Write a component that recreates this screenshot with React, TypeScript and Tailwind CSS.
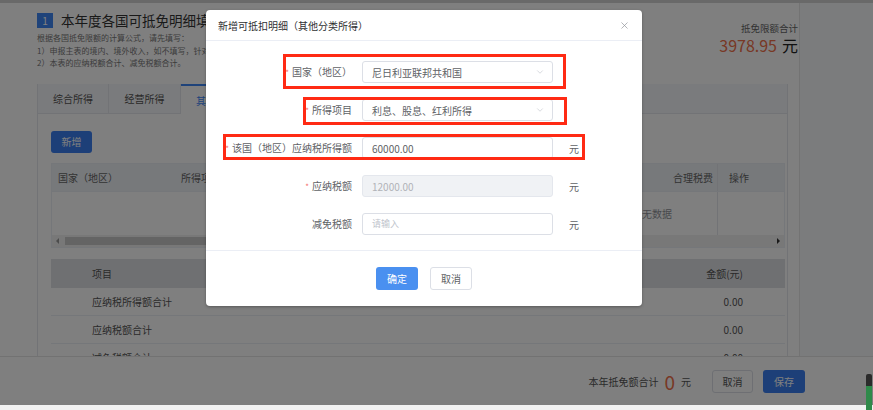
import { ChevronDown, X } from 'lucide-react'

const font = "font-['Noto_Sans_CJK_SC','Noto_Sans',sans-serif]"

function Row({ label, required, unit, children }: { label: string; required?: boolean; unit?: boolean; children: React.ReactNode }) {
  return (
    <div className="flex h-[22px] items-center">
      <div className="w-[146px] text-right text-[10px] leading-none text-[#606266]">
        {required && <span className="mr-[3px] text-[8px] text-[#f56c6c]">*</span>}
        {label}
      </div>
      <div className="ml-[10px] h-full w-[191px]">{children}</div>
      {unit && <span className="ml-[16px] text-[10px] text-[#606266]">元</span>}
    </div>
  )
}

export default function App() {
  return (
    <div className={`relative h-[410px] w-[873px] overflow-hidden bg-[#f2f2f2] ${font}`}>
      {/* background page */}
      <div className="flex h-[405px] flex-col border-t-[3px] border-[#d2d2d2] bg-white">
        <div className="flex flex-1 overflow-hidden">
          <div className="w-[800px] border-r border-[#e6e6e6] pl-[37px] pt-[9px]">
            {/* header */}
            <div className="flex h-[72px] items-start justify-between">
              <div>
                <div className="flex h-[16px] items-center gap-[8px]">
                  <div className="flex h-[15px] w-[16px] items-center justify-center bg-[#3f86f5] text-[10px] text-white">1</div>
                  <span className="text-[13.5px] text-[#333]">本年度各国可抵免明细填报</span>
                </div>
                <div className="mt-[4px] text-[8px] leading-[12.5px] text-[#777]">
                  <p>根据各国抵免限额的计算公式，请先填写：</p>
                  <p>1）申报主表的境内、境外收入，如不填写，针对各国的抵免限额计算将会有误；</p>
                  <p>2）本表的应纳税额合计、减免税额合计。</p>
                </div>
              </div>
              <div className="pr-[1px] pt-[11px] text-right">
                <p className="text-[9.5px] leading-[11px] text-[#666]">抵免限额合计</p>
                <p className="mt-[2px] leading-[19px]">
                  <span className="text-[16px] text-[#f0714a]">3978.95</span>
                  <span className="ml-[5px] text-[16px] text-[#222]">元</span>
                </p>
              </div>
            </div>

            {/* panel */}
            <div className="w-[751px] border-x border-[#e4e7ed]">
              <div className="flex h-[30px] border-b border-[#e4e7ed] bg-[#f5f7fa] text-[10px] text-[#555]">
                <div className="flex w-[71px] items-center justify-center border-r border-[#e4e7ed]">综合所得</div>
                <div className="flex w-[72px] items-center justify-center border-r border-[#e4e7ed]">经营所得</div>
                <div className="-mb-px flex w-[90px] items-center justify-center border-t-2 border-[#3f86f5] bg-white text-[#3f86f5]">其他分类所得</div>
              </div>
              <div className="pl-[13px] pt-[13px]">
                <button className="h-[22px] w-[41px] rounded-[3px] bg-[#3a7ef0] text-[10px] text-white">新增</button>

                <div className="mt-[10px] w-[734px] border border-[#ebeef5] text-[10px]">
                  <div className="flex h-[27px] items-center bg-[#eef2f7] text-[#666]">
                    <div className="w-[129px] pl-[6px]">国家（地区）</div>
                    <div className="flex-1">所得项目</div>
                    <div className="w-[60px] pr-[4px] text-right">合理税费</div>
                    <div className="flex h-full w-[67px] items-center border-l border-[#e4e7ed] pl-[11px]">操作</div>
                  </div>
                  <div className="flex h-[44px] border-t border-[#ebeef5]">
                    <div className="flex flex-1 items-center pl-[580px] text-[#909399]">暂无数据</div>
                    <div className="w-[67px] border-l border-[#e4e7ed]" />
                  </div>
                  <div className="flex h-[12px] items-center bg-[#f1f1f1] px-[4px]">
                    <span className="h-0 w-0 border-y-[3px] border-r-[3px] border-y-transparent border-r-[#999]" />
                    <div className="ml-[6px] h-[8px] w-[420px] bg-[#c8c8c8]" />
                    <div className="flex-1" />
                    <span className="h-0 w-0 border-y-[3px] border-l-[3px] border-y-transparent border-l-[#333]" />
                  </div>
                </div>

                <div className="mt-[11px] w-[734px] text-[10px] text-[#555]">
                  <div className="flex h-[29px] items-center justify-between bg-[#dfe1e4] pl-[41px] pr-[42px]">
                    <span>项目</span>
                    <span>金额(元)</span>
                  </div>
                  {['应纳税所得额合计', '应纳税额合计', '减免税额合计'].map(t => (
                    <div key={t} className="flex h-[28px] items-center justify-between border-b border-[#ebeef5] pl-[41px] pr-[42px]">
                      <span>{t}</span>
                      <span>0.00</span>
                    </div>
                  ))}
                </div>
              </div>
            </div>
          </div>
          <div className="flex-1 bg-[#f7f8fa]" />
        </div>

        {/* footer */}
        <div className="flex h-[49px] items-center justify-end border-t border-[#e4e4e4] bg-white pr-[68px] text-[10px] text-[#555]">
          <span>本年抵免额合计</span>
          <span className="mx-[6px] text-[19px] leading-none text-[#f0714a]">0</span>
          <span>元</span>
          <button className="ml-[21px] h-[23px] w-[41px] rounded-[3px] border border-[#dcdfe6] bg-white text-[#555]">取消</button>
          <button className="ml-[10px] h-[23px] w-[42px] rounded-[3px] bg-[#3a7ef0] text-white">保存</button>
        </div>
      </div>

      {/* mask */}
      <div className="absolute left-0 top-0 h-[405px] w-full bg-black/50" />

      {/* side widget */}
      <div className="absolute bottom-0 right-[1px] flex h-[36px] w-[6px] flex-col overflow-hidden rounded-t-[2px]">
        <div className="h-[12px] bg-[#2b2b2b]" />
        <div className="flex-1 bg-[#2f8a4a]" />
      </div>

      {/* dialog */}
      <div className="absolute left-[206px] top-[10px] flex h-[296px] w-[436px] flex-col rounded-[4px] bg-white shadow-[0_1px_3px_rgba(0,0,0,0.3)]">
        <div className="flex h-[31px] items-center justify-between border-b border-[#ebeef5] pl-[12px] pr-[12px]">
          <span className="text-[10px] text-[#303133]">新增可抵扣明细（其他分类所得）</span>
          <X className="h-[11px] w-[11px] text-[#909399]" strokeWidth={1.5} />
        </div>

        <div className="flex flex-1 flex-col gap-[16px] border-b border-[#ebeef5] pt-[20px]">
          <Row label="国家（地区）" required>
            <div className="flex h-full items-center justify-between rounded-[3px] border border-[#dcdfe6] pl-[9px] pr-[7px] text-[10px] text-[#606266]">
              <span>尼日利亚联邦共和国</span>
              <ChevronDown className="h-[10px] w-[10px] text-[#c0c4cc]" strokeWidth={1.5} />
            </div>
          </Row>
          <Row label="所得项目" required>
            <div className="flex h-full items-center justify-between rounded-[3px] border border-[#dcdfe6] pl-[9px] pr-[7px] text-[10px] text-[#606266]">
              <span>利息、股息、红利所得</span>
              <ChevronDown className="h-[10px] w-[10px] text-[#c0c4cc]" strokeWidth={1.5} />
            </div>
          </Row>
          <Row label="该国（地区）应纳税所得额" required unit>
            <div className="flex h-full items-center rounded-[3px] border border-[#dcdfe6] pl-[9px] text-[10px] text-[#606266]">60000.00</div>
          </Row>
          <Row label="应纳税额" required unit>
            <div className="flex h-full items-center rounded-[3px] border border-[#e4e7ed] bg-[#f0f2f5] pl-[9px] text-[10px] text-[#b0b3b8]">12000.00</div>
          </Row>
          <Row label="减免税额" unit>
            <div className="flex h-full items-center rounded-[3px] border border-[#dcdfe6] pl-[9px] text-[9px] text-[#c0c4cc]">请输入</div>
          </Row>
        </div>

        <div className="flex h-[55px] items-center justify-center gap-[12px]">
          <button className="h-[23px] w-[42px] rounded-[3px] bg-[#4a90f0] text-[10px] text-white">确定</button>
          <button className="h-[23px] w-[42px] rounded-[3px] border border-[#dcdfe6] bg-white text-[10px] text-[#606266]">取消</button>
        </div>

        {/* highlight marks */}
        <div className="absolute left-[77px] top-[44px] h-[35px] w-[283px] border-[3px] border-[#ff2a14]" />
        <div className="absolute left-[97px] top-[87px] h-[28px] w-[264px] border-[3px] border-[#ff2a14]" />
        <div className="absolute left-[17px] top-[124px] h-[26px] w-[362px] border-[3px] border-[#ff2a14]" />
      </div>
    </div>
  )
}
